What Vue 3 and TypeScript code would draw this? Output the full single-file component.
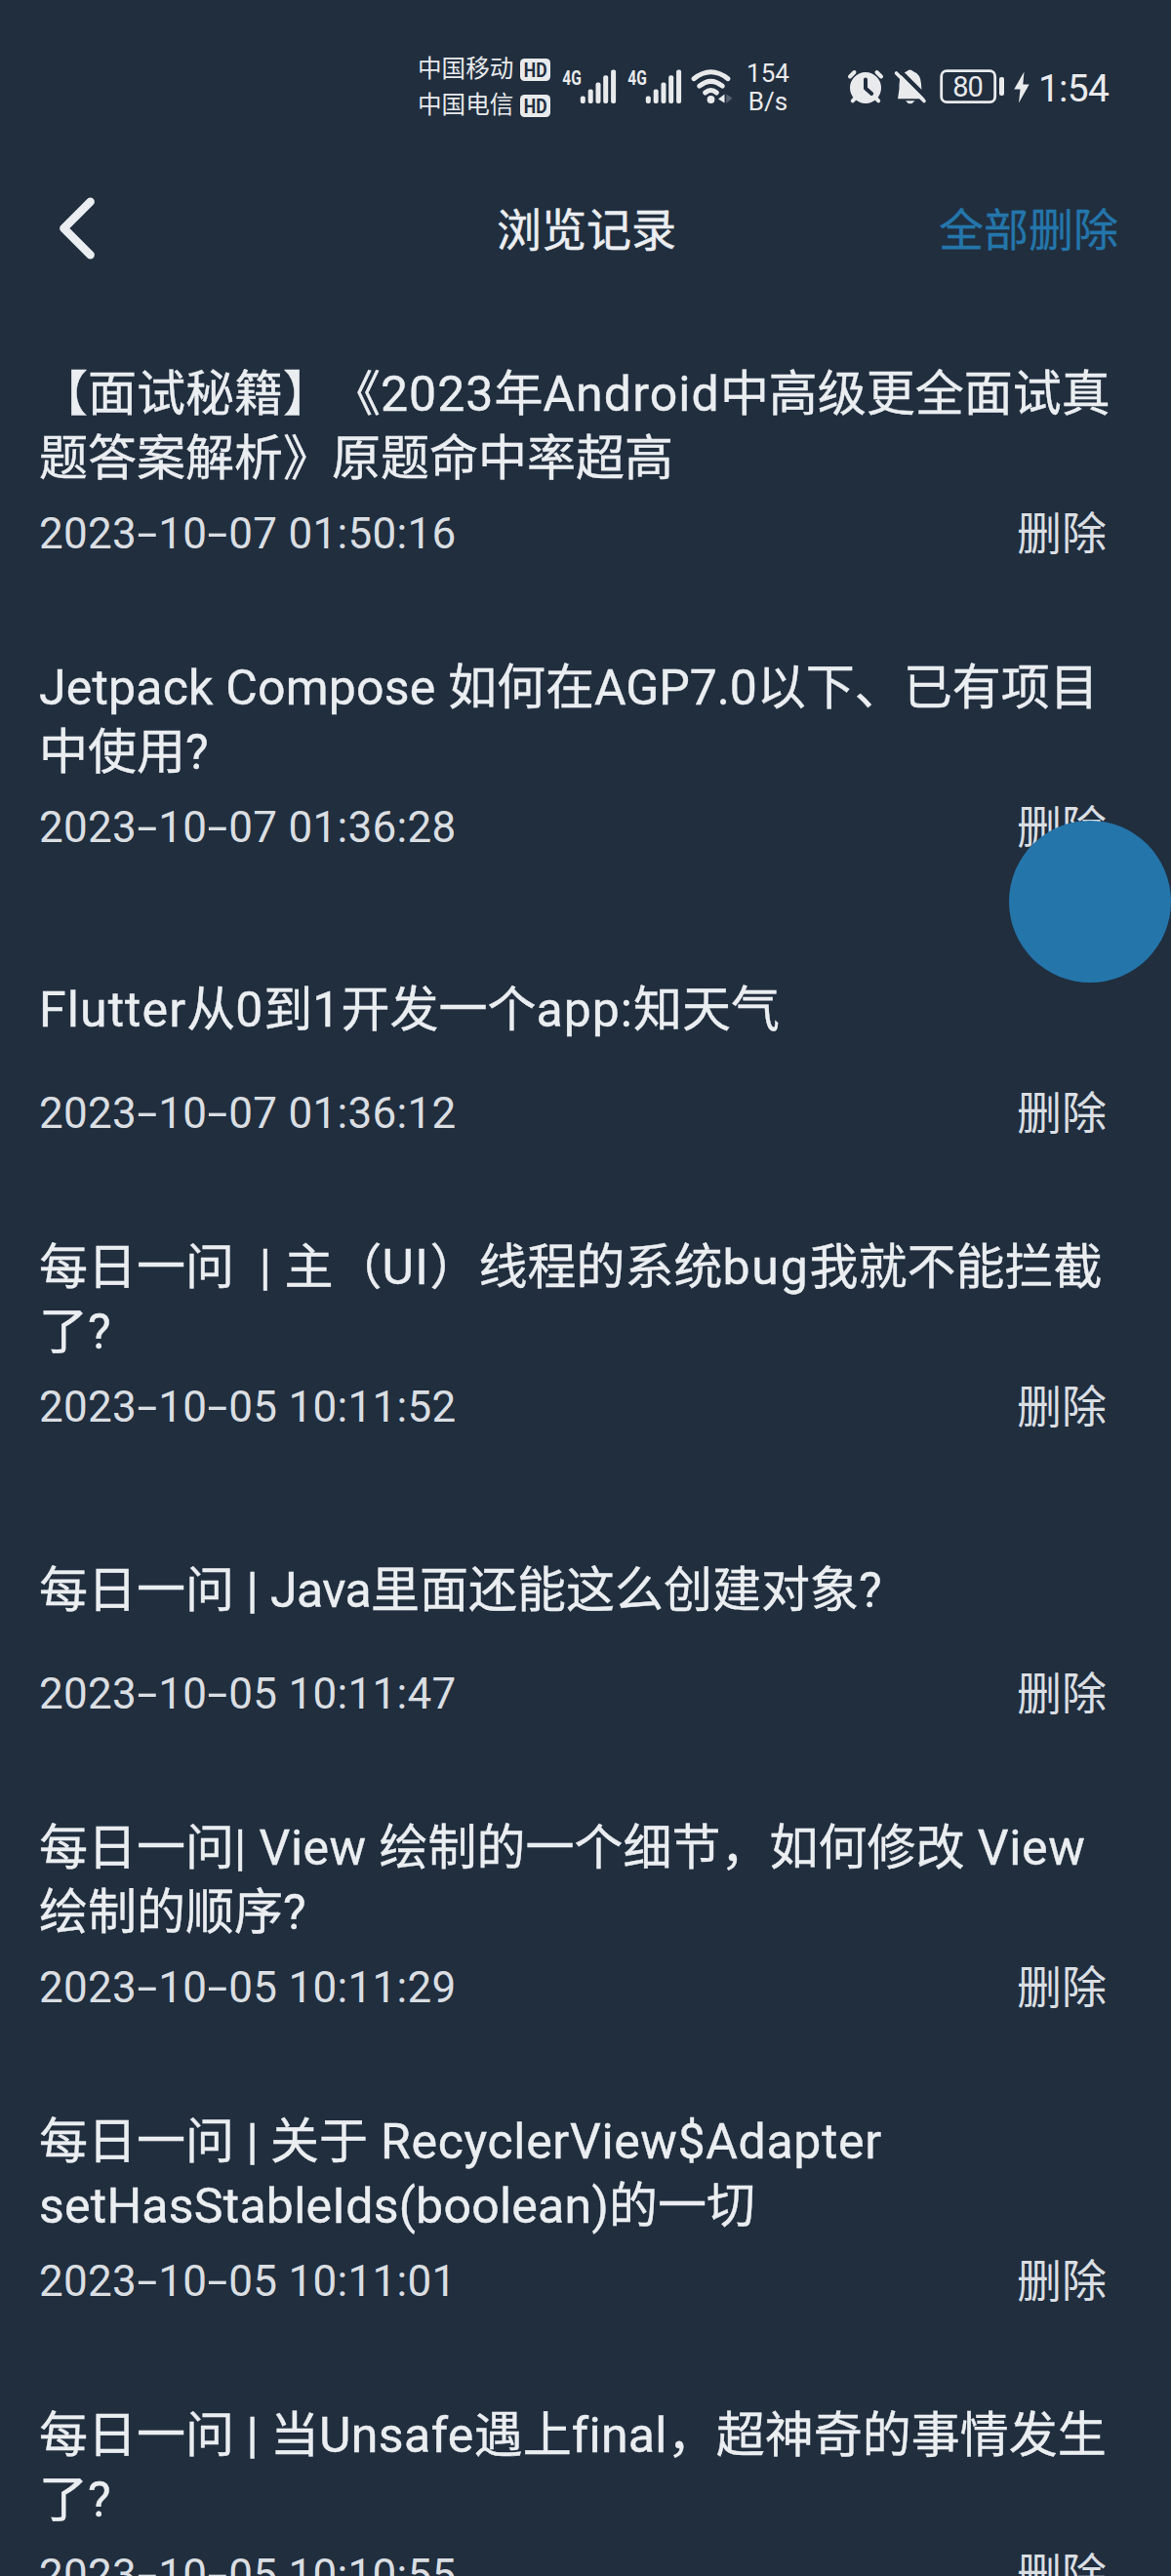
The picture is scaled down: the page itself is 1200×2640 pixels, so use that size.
<script setup lang="ts">
type Run = [text: string, spacing?: number]
interface Entry {
  lines: Run[][]
  time: string
}

const carriers: string[] = ['中国移动', '中国电信']

const bars = [
  { x: 21.3, top: 29 },
  { x: 29.2, top: 22 },
  { x: 37, top: 15 },
  { x: 44.7, top: 7.8 },
  { x: 52.6, top: 2 },
]

const entries: Entry[] = [
  {
    lines: [
      [['【面试秘籍】《'], ['2023', 1], ['年'], ['Android', 1.1], ['中高级更全面试真']],
      [['题答案解析》原题命中率超高']],
    ],
    time: '2023-10-07 01:50:16',
  },
  {
    lines: [
      [['Jetpack Compose ', 0.2], ['如何在'], ['AGP7.0', -0.1], ['以下、已有项目']],
      [['中使用'], ['?']],
    ],
    time: '2023-10-07 01:36:28',
  },
  {
    lines: [[['Flutter', 1.1], ['从'], ['0', 1], ['到'], ['1', 1], ['开发一个'], ['app:', 1], ['知天气']]],
    time: '2023-10-07 01:36:12',
  },
  {
    lines: [
      [['每日一问'], ['  | ', 0.5], ['主（'], ['UI', 1.5], ['）线程的系统'], ['bug', 1.8], ['我就不能拦截']],
      [['了'], ['?']],
    ],
    time: '2023-10-05 10:11:52',
  },
  {
    lines: [[['每日一问'], [' | ', 0], ['Java', -0.6], ['里面还能这么创建对象'], ['?']]],
    time: '2023-10-05 10:11:47',
  },
  {
    lines: [
      [['每日一问'], ['| View ', 0.5], ['绘制的一个细节，如何修改'], [' View', 0.7]],
      [['绘制的顺序'], ['?']],
    ],
    time: '2023-10-05 10:11:29',
  },
  {
    lines: [
      [['每日一问'], [' | ', 0], ['关于'], [' RecyclerView$Adapter', 0.65]],
      [['setHasStableIds(boolean)', 0.25], ['的一切']],
    ],
    time: '2023-10-05 10:11:01',
  },
  {
    lines: [
      [['每日一问'], [' | ', 0], ['当'], ['Unsafe', 0.4], ['遇上'], ['final', 0.3], ['，超神奇的事情发生']],
      [['了'], ['?']],
    ],
    time: '2023-10-05 10:10:55',
  },
]

const timeParts = (time: string): string[] => time.split(/(-)/)
</script>

<template>
  <div class="screen">
    <div class="status">
      <div class="carriers">
        <div v-for="name in carriers" :key="name" class="carrier">
          <span>{{ name }}</span>
          <svg class="hd" width="31" height="23" viewBox="0 0 31 23">
            <rect width="31" height="23" rx="4.5" fill="#e9eaec" />
            <text x="3.8" y="18.6" textLength="23.8" lengthAdjust="spacingAndGlyphs" font-size="20" font-weight="700" fill="#202e3e">HD</text>
          </svg>
        </div>
      </div>
      <svg v-for="n in 2" :key="n" class="signal" width="56" height="36" viewBox="0 0 56 36">
        <text x="0.3" y="15.6" textLength="19.5" lengthAdjust="spacingAndGlyphs" font-size="21" font-weight="700" fill="#e9eaec">4G</text>
        <rect v-for="b in bars" :key="b.x" :x="b.x - 2.5" :y="b.top - 1.6" width="5" :height="36.6 - b.top" rx="2" fill="#e9eaec" />
      </svg>
      <svg class="wifi" width="44" height="36" viewBox="0 0 44 36" fill="none" stroke="#e9eaec" stroke-width="5" stroke-linecap="round">
        <path d="M3 9.7Q20.500 -4.200 38 9.700" />
        <path d="M8.700 17.200Q20.500 7.400 32.300 17.200" />
        <path d="M14.600 24Q20.500 19 26.400 24" />
        <circle cx="20.500" cy="31" r="3.900" fill="#e9eaec" stroke="none" />
        <path d="M34.500 25.500V34.500L28 30.500Z" fill="#e9eaec" stroke="none" />
        <path d="M36.300 25.500V35L42.500 29.500Z" fill="#56616d" stroke="none" />
      </svg>
      <div class="speed"><span>154</span><span>B/s</span></div>
      <svg class="alarm" width="36" height="36" viewBox="0 0 36 36" fill="none" stroke-linecap="round">
        <circle cx="18" cy="19" r="16" fill="#e9eaec" />
        <path d="M2 7.500L6.500 3M34 7.500L29.500 3" stroke="#e9eaec" stroke-width="4" />
        <path d="M8 29L4.800 32.300M28 29L31.200 32.300" stroke="#e9eaec" stroke-width="4" />
        <path d="M18 10.500V19.500L24.200 25" stroke="#202e3e" stroke-width="4" stroke-linejoin="round" />
      </svg>
      <svg class="bell" width="34" height="37" viewBox="0 0 34 37">
        <path d="M4 30.300L5.500 20V15Q5.500 4.500 13 2.300Q16.500 -1.500 20 2.300Q27.500 5 28 15L28.500 23L31.500 30.300Z" fill="#e9eaec" />
        <path d="M12 32.200H21.500Q16.700 38.500 12 32.200Z" fill="#e9eaec" />
        <path d="M4.500 0L33 28.500" stroke="#202e3e" stroke-width="4.500" />
        <path d="M2.500 4L31 32.500" stroke="#e9eaec" stroke-width="3.600" stroke-linecap="round" />
        <path d="M0 4.500L5.800 10.300L4 22L0 22Z" fill="#202e3e" />
      </svg>
      <svg class="battery" width="67" height="36" viewBox="0 0 67 36">
        <rect x="1.700" y="1.700" width="55" height="32" rx="5.500" fill="none" stroke="#e9eaec" stroke-width="2.800" />
        <rect x="61" y="8" width="5" height="19" rx="2" fill="#e9eaec" />
        <text x="28.500" y="28.300" text-anchor="middle" font-size="29" letter-spacing="-1" fill="#e9eaec">80</text>
      </svg>
      <svg class="bolt" width="16" height="33" viewBox="0 0 16 33"><path d="M10.500 0.500L0.200 18.500H6.500L5 32.500L15.700 13.500H9.300Z" fill="#e9eaec" /></svg>
      <div class="clock">1:54</div>
    </div>

    <header class="bar">
      <svg class="back" width="46" height="70" viewBox="0 0 46 70" fill="none" stroke="#ebeef1" stroke-width="8.500" stroke-linecap="round" stroke-linejoin="round">
        <path d="M36.600 7.700L9.400 35L36.600 62.300" />
      </svg>
      <h1>浏览记录</h1>
      <span class="clear">全部删除</span>
    </header>

    <main class="list">
      <article v-for="entry in entries" :key="entry.time" class="entry">
        <div class="title">
          <div v-for="(line, i) in entry.lines" :key="i" class="line"><span v-for="(run, j) in line" :key="j" :style="{ letterSpacing: (run[1] ?? 0) + 'px' }">{{ run[0] }}</span></div>
        </div>
        <div class="meta">
          <span class="time"><span v-for="(part, k) in timeParts(entry.time)" :key="k" :class="{ dash: part === '-' }">{{ part }}</span></span>
          <span class="remove">删除</span>
        </div>
      </article>
    </main>

    <div class="bubble"></div>
  </div>
</template>

<style>
body {
  background: #202e3e;
}
</style>

<style scoped>
.screen {
  position: relative;
  width: 1200px;
  height: 2640px;
  overflow: hidden;
  background: #202e3e;
  color: #ebeef1;
  font-family: Roboto, "Noto Sans CJK SC", sans-serif;
  text-spacing-trim: space-all;
}
.status {
  display: flex;
  align-items: flex-start;
  height: 180px;
  box-sizing: border-box;
  padding: 52px 0 0 428px;
  color: #e9eaec;
}
.status svg {
  flex: none;
  overflow: visible;
}
.carriers {
  width: 148px;
}
.carrier {
  display: flex;
  align-items: center;
  height: 37px;
  font-size: 24.600px;
  line-height: 38px;
}
.hd {
  margin: 1px 0 0 7px;
}
.signal {
  margin: 19px 11px 0 0;
}
.wifi {
  margin: 19px 0 0 -2px;
}
.speed {
  display: flex;
  flex-direction: column;
  width: 62px;
  margin: 9px 1px 0 4px;
  font-size: 26px;
  line-height: 29px;
  text-align: center;
}
.alarm {
  margin: 19px 0 0 50px;
}
.bell {
  margin: 19px 0 0 11px;
}
.battery {
  margin: 19px 0 0 13px;
}
.bolt {
  margin: 21px 0 0 9px;
}
.clock {
  margin: 16px 0 0 9px;
  font-size: 39px;
  line-height: 46px;
  letter-spacing: -0.800px;
}
.bar {
  display: grid;
  grid-template-columns: 1fr auto 1fr;
  align-items: center;
  height: 108px;
  padding: 0 54px 0 56px;
  font-size: 46px;
}
.bar h1 {
  margin: 4px 0 0;
  font-size: 46px;
  font-weight: 400;
  line-height: 66px;
  -webkit-text-stroke: 0.500px currentColor;
}
.clear {
  justify-self: end;
  margin-top: 4px;
  line-height: 66px;
  color: #2476ab;
  -webkit-text-stroke: 0.300px currentColor;
}
.list {
  padding: 83px 0 0 40px;
}
.entry {
  padding-bottom: 95px;
}
.title {
  display: flex;
  flex-direction: column;
  justify-content: center;
  min-height: 124.400px;
  font-size: 50px;
  line-height: 66px;
  -webkit-text-stroke: 0.400px currentColor;
}
.line {
  white-space: pre;
  height: 66px;
}
.meta {
  display: flex;
  justify-content: space-between;
  height: 60px;
  margin-top: 14px;
  padding-right: 66px;
  line-height: 61px;
  color: #dadee2;
}
.time {
  font-size: 44px;
  letter-spacing: 0.300px;
}
.dash {
  display: inline-block;
  width: 22px;
  text-align: center;
  transform: scaleX(1.700);
}
.remove {
  font-size: 46px;
}
.bubble {
  position: absolute;
  top: 841px;
  right: 0;
  width: 166px;
  height: 166px;
  border-radius: 50%;
  background: #2475aa;
}
</style>
